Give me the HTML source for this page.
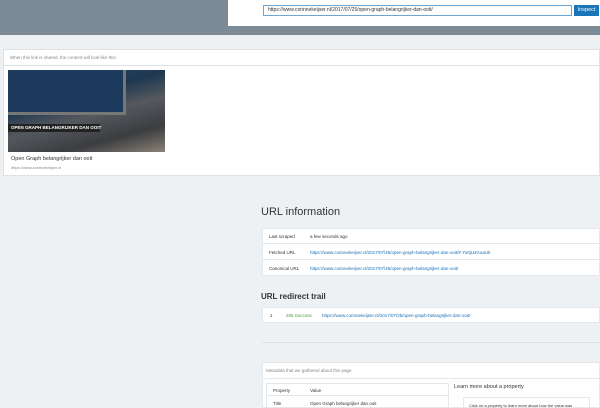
<!DOCTYPE html><html><head><style>
*{margin:0;padding:0;box-sizing:border-box}
body{width:600px;height:408px;overflow:hidden;background:#eef1f3;font-family:"Liberation Sans",sans-serif;position:relative;color:#333}
.a{position:absolute;white-space:nowrap}
.l{color:#1a6fb5}
</style></head><body>
<div class="a" style="left:0;top:0;width:600px;height:35px;background:#7b8a95"></div>
<div class="a" style="left:228px;top:0;width:372px;height:26px;background:#fff"></div>
<div class="a" style="left:263px;top:5px;width:309px;height:11px;border:1px solid #6aa6d6;font-size:5px;line-height:9px;padding-left:4px">https://www.corinnekeijser.nl/2017/07/25/open-graph-belangrijker-dan-ooit/</div>
<div class="a" style="left:574px;top:5px;width:25px;height:11px;background:#1a74b8;color:#fff;font-size:5.5px;line-height:11px;text-align:center">Inspect</div>
<div class="a" style="left:3px;top:49px;width:597px;height:127px;background:#fff;border:1px solid #dde2e6"></div>
<div class="a" style="left:3px;top:65px;width:597px;height:1px;background:#dde2e6"></div>
<div class="a" style="left:10px;top:55px;font-size:4.5px;color:#888">When this link is shared, the content will look like this:</div>
<div class="a" style="left:8px;top:70px;width:157px;height:82px;background:linear-gradient(165deg,#2a4a66 0%,#1e3850 35%,#55585e 55%,#3b3d40 78%,#8a8276 100%)"></div>
<div class="a" style="left:8px;top:70px;width:118px;height:45px;background:#1c3a5c;border-right:3px solid #777;border-bottom:3px solid #777"></div>
<div class="a" style="left:8px;top:124px;width:92px;height:8px;background:#222;color:#fff;font-size:4.5px;font-weight:bold;line-height:8px;padding-left:3px">OPEN GRAPH BELANGRIJKER DAN OOIT</div>
<div class="a" style="left:11px;top:156px;font-size:5.5px">Open Graph belangrijker dan ooit</div>
<div class="a" style="left:11px;top:165px;font-size:4px;color:#888">https://www.corinnekeijser.nl</div>
<div class="a" style="left:261px;top:206px;font-size:11px;color:#333">URL information</div>
<div class="a" style="left:262px;top:228px;width:338px;height:48px;background:#fff;border:1px solid #e4e8eb"></div>
<div class="a" style="left:262px;top:243px;width:338px;height:1px;background:#e4e8eb"></div>
<div class="a" style="left:262px;top:259px;width:338px;height:1px;background:#e4e8eb"></div>
<div class="a" style="left:269px;top:234px;font-size:4.5px">Last scraped</div>
<div class="a" style="left:310px;top:234px;font-size:4.5px">a few seconds ago</div>
<div class="a" style="left:269px;top:250px;font-size:4.5px">Fetched URL</div>
<div class="a l" style="left:310px;top:250px;font-size:4.5px">https://www.corinnekeijser.nl/2017/07/25/open-graph-belangrijker-dan-ooit/#.Yu0jUZAuaUk</div>
<div class="a" style="left:269px;top:266px;font-size:4.5px">Canonical URL</div>
<div class="a l" style="left:310px;top:266px;font-size:4.5px">https://www.corinnekeijser.nl/2017/07/25/open-graph-belangrijker-dan-ooit/</div>
<div class="a" style="left:261px;top:292px;font-size:8px;font-weight:bold">URL redirect trail</div>
<div class="a" style="left:262px;top:307px;width:338px;height:16px;background:#fff;border:1px solid #e4e8eb"></div>
<div class="a" style="left:270px;top:313px;font-size:4.5px">1</div>
<div class="a" style="left:286px;top:313px;font-size:4.5px;color:#4a9a3a">206 Success</div>
<div class="a l" style="left:322px;top:313px;font-size:4.5px">https://www.corinnekeijser.nl/2017/07/25/open-graph-belangrijker-dan-ooit/</div>
<div class="a" style="left:262px;top:342px;width:338px;height:1px;background:#dde2e6"></div>
<div class="a" style="left:262px;top:362px;width:338px;height:46px;background:#fff;border:1px solid #e4e8eb"></div>
<div class="a" style="left:262px;top:378px;width:338px;height:1px;background:#e4e8eb"></div>
<div class="a" style="left:266px;top:368px;font-size:4.5px;color:#888">Metadata that we gathered about this page.</div>
<div class="a" style="left:266px;top:383px;width:183px;height:25px;border:1px solid #e4e8eb"></div>
<div class="a" style="left:266px;top:395px;width:183px;height:1px;background:#e4e8eb"></div>
<div class="a" style="left:273px;top:388px;font-size:4.5px">Property</div>
<div class="a" style="left:310px;top:388px;font-size:4.5px">Value</div>
<div class="a" style="left:273px;top:401px;font-size:4.5px">Title</div>
<div class="a" style="left:310px;top:401px;font-size:4.5px">Open Graph belangrijker dan ooit</div>
<div class="a" style="left:454px;top:384px;font-size:5.5px">Learn more about a property</div>
<div class="a" style="left:463px;top:397px;width:127px;height:11px;border:1px solid #e4e8eb;border-bottom:none"></div>
<div class="a" style="left:469px;top:403px;font-size:4px">Click on a property to learn more about how the value was</div>
</body></html>
